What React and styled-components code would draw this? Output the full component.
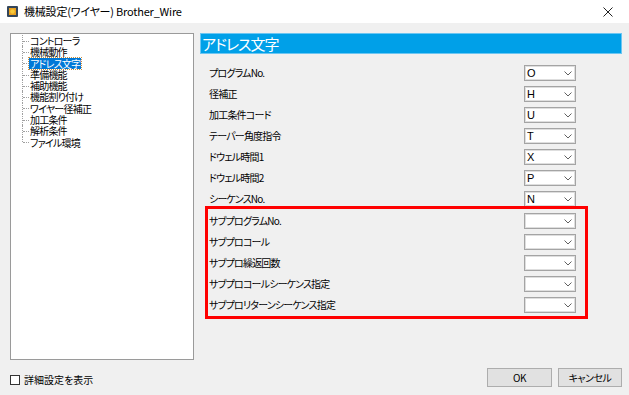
import React from 'react';
import styled, { createGlobalStyle } from 'styled-components';

const Global = createGlobalStyle`
  html, body { margin: 0; padding: 0; }
  body {
    width: 629px; height: 395px; overflow: hidden; background: #f0f0f0;
    font-family: "Noto Sans CJK JP", "Noto Sans", sans-serif;
  }
`;

const Window = styled.div`
  width: 629px; height: 395px; display: flex; flex-direction: column;
  background: #f0f0f0; font-feature-settings: "palt"; color: #000;
`;

const TitleBar = styled.div`
  height: 23px; flex: none; background: #fff; display: flex; align-items: center;
  padding-left: 7px;
`;

const TitleText = styled.span`
  font-size: 11px; margin-left: 6px; line-height: 23px; letter-spacing: -0.2px;
`;

const CloseButton = styled.div`
  margin-left: auto; width: 42px; height: 23px; display: flex;
  align-items: center; justify-content: center;
`;

const Content = styled.div`
  display: flex; height: 337px; padding: 10px 0 0 10px; box-sizing: border-box; flex: none;
`;

const Tree = styled.div`
  width: 184px; height: 327px; box-sizing: border-box; background: #fff;
  border: 1px solid #9a9a9a; padding: 1px 0 0 11px;
`;

const TreeItem = styled.div`
  position: relative; height: 11.3px; line-height: 11.3px; font-size: 10px;
  padding-left: 7px; white-space: nowrap;
  &::before {
    content: ""; position: absolute; left: 0; top: 0;
    height: ${p => (p.$last ? '50%' : '100%')};
    border-left: 1px dotted #a0a0a0;
  }
  &::after {
    content: ""; position: absolute; left: 1px; top: 50%; width: 6px;
    border-top: 1px dotted #a0a0a0;
  }
`;

const TreeLabel = styled.span`
  display: inline-block; padding: 0 1px; height: 11px; line-height: 11px;
  letter-spacing: -0.8px;
  background: ${p => (p.$selected ? '#0078d7' : 'transparent')};
  color: ${p => (p.$selected ? '#fff' : '#000')};
  outline: ${p => (p.$selected ? '1px dotted #c89040' : 'none')};
`;

const RightPanel = styled.div`
  margin-left: 6px; width: 422px; display: flex; flex-direction: column;
`;

const Header = styled.div`
  height: 21px; box-sizing: border-box; background: #00a0e8;
  border: 1px solid #6cc6f2; color: #fff; font-size: 15px; line-height: 19px;
  padding-left: 1px; letter-spacing: -1px;
`;

const Rows = styled.div`
  margin-top: 8px; margin-left: 5px; width: 383px; display: flex; flex-direction: column;
`;

const Row = styled.div`
  height: 21px; display: flex; align-items: center; justify-content: space-between;
  padding: ${p => (p.$inGroup ? '0 9px 0 1px' : '0 12px 0 4px')};
`;

const Label = styled.span`
  font-size: 10px; white-space: nowrap; letter-spacing: -0.8px;
`;

const Group = styled.div`
  margin-top: -3px; border: 3px solid #ff0000; padding: 1px 0 1px;
  display: flex; flex-direction: column;
`;

const Select = styled.div`
  width: 52px; height: 16px; box-sizing: border-box; background: #fff;
  border: 1px solid #a4a4a4; box-shadow: inset 0 0 0 1px #dedede;
  display: flex; align-items: center; padding: 0 3px 0 2px;
`;

const SelectValue = styled.span`
  font-size: 11px; line-height: 14px; flex: 1; font-family: "Liberation Sans", sans-serif;
`;

const Footer = styled.div`
  height: 35px; display: flex; align-items: center; padding: 0 7px 0 10px; flex: none;
`;

const CheckBox = styled.div`
  width: 10px; height: 10px; box-sizing: border-box; border: 1px solid #333; background: #fff;
  margin-top: 4px;
`;

const CheckText = styled.span`
  font-size: 10px; margin-left: 4px; margin-top: 4px;
`;

const Buttons = styled.div`
  margin-left: auto; display: flex; gap: 6px;
`;

const Button = styled.div`
  width: ${p => p.$w}px; height: 19px; box-sizing: border-box; background: #e1e1e1;
  border: 1px solid #adadad; font-size: 10px; letter-spacing: -0.5px;
  display: flex; align-items: center; justify-content: center;
`;

const Chevron = () => (
  <svg width="8" height="5" viewBox="0 0 8 5" style={{ flex: 'none', marginTop: 2 }}>
    <path d="M0.5 0.5 L4 4 L7.5 0.5" fill="none" stroke="#606060" strokeWidth="1" />
  </svg>
);

const AppIcon = () => (
  <svg width="11" height="11" viewBox="0 0 11 11">
    <rect x="0" y="0" width="11" height="11" rx="1" fill="#34465a" />
    <rect x="2" y="2" width="7" height="7" fill="#e8a020" />
    <circle cx="5.5" cy="5.5" r="2.2" fill="#f7c93a" />
  </svg>
);

const CloseIcon = () => (
  <svg width="10" height="10" viewBox="0 0 10 10">
    <path d="M0.5 0.5 L9.5 9.5 M9.5 0.5 L0.5 9.5" stroke="#222" strokeWidth="1" />
  </svg>
);

const treeItems = ['コントローラ', '機械動作', 'アドレス文字', '準備機能', '補助機能', '機能割り付け', 'ワイヤー径補正', '加工条件', '解析条件', 'ファイル環境'];

const rows = [
  ['プログラムNo.', 'O'], ['径補正', 'H'], ['加工条件コード', 'U'], ['テーパー角度指令', 'T'],
  ['ドウェル時間1', 'X'], ['ドウェル時間2', 'P'], ['シーケンスNo.', 'N'],
];
const groupRows = ['サブプログラムNo.', 'サブプロコール', 'サブプロ繰返回数', 'サブプロコールシーケンス指定', 'サブプロリターンシーケンス指定'];

const Field = ({ label, value, inGroup }) => (
  <Row $inGroup={inGroup}>
    <Label>{label}</Label>
    <Select>
      <SelectValue>{value}</SelectValue>
      <Chevron />
    </Select>
  </Row>
);

export default function App() {
  return (
    <Window>
      <Global />
      <TitleBar>
        <AppIcon />
        <TitleText>機械設定(ワイヤー) Brother_Wire</TitleText>
        <CloseButton><CloseIcon /></CloseButton>
      </TitleBar>
      <Content>
        <Tree>
          {treeItems.map((t, i) => (
            <TreeItem key={t} $last={i === treeItems.length - 1}>
              <TreeLabel $selected={i === 2}>{t}</TreeLabel>
            </TreeItem>
          ))}
        </Tree>
        <RightPanel>
          <Header>アドレス文字</Header>
          <Rows>
            {rows.map(([l, v]) => <Field key={l} label={l} value={v} />)}
            <Group>
              {groupRows.map(l => <Field key={l} label={l} value="" inGroup />)}
            </Group>
          </Rows>
        </RightPanel>
      </Content>
      <Footer>
        <CheckBox />
        <CheckText>詳細設定を表示</CheckText>
        <Buttons>
          <Button $w={65}>OK</Button>
          <Button $w={64}>キャンセル</Button>
        </Buttons>
      </Footer>
    </Window>
  );
}
